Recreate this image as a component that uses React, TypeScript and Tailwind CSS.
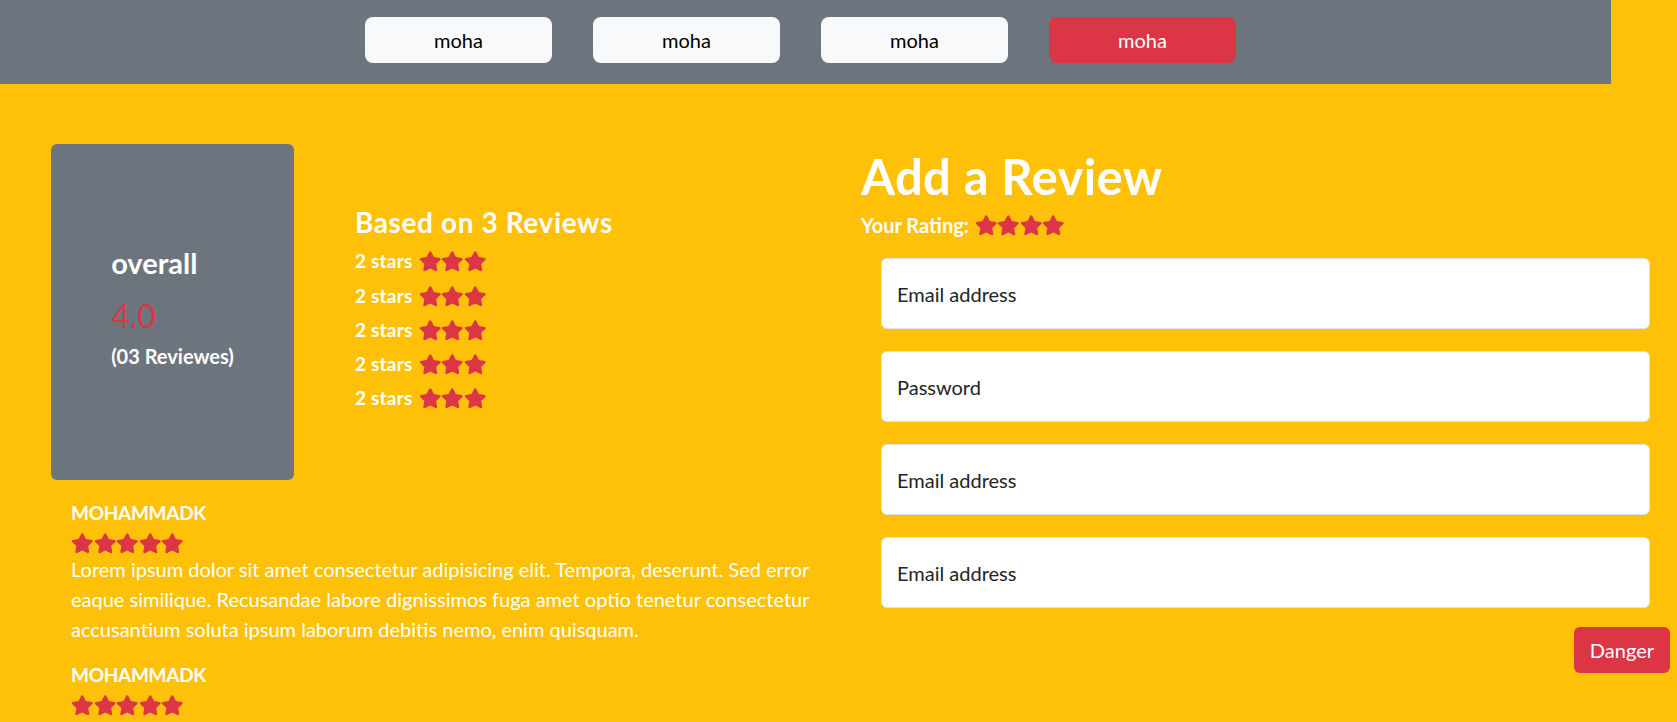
import { FaStar } from "react-icons/fa";

const navItems = ["moha", "moha", "moha", "moha"];
const inputs = ["Email address", "Password", "Email address", "Email address"];

const Stars = ({ count, className }: { count: number; className?: string }) => (
  <div className={`flex items-center text-[22.5px] text-[#dc3545] ${className ?? ""}`}>
    {[...Array(count)].map((_, i) => (
      <FaStar key={i} />
    ))}
  </div>
);

const Review = () => (
  <div className="mb-[19px]">
    <h5 className="text-[19px] leading-[24px] font-bold tracking-[-0.3px] text-white">MOHAMMADK</h5>
    <Stars count={5} className="mt-[8px] h-[21px]" />
    <p className="text-[20px] leading-[30px] text-white">
      Lorem ipsum dolor sit amet consectetur adipisicing elit. Tempora, deserunt. Sed error eaque
      similique. Recusandae labore dignissimos fuga amet optio tenetur consectetur accusantium
      soluta ipsum laborum debitis nemo, enim quisquam.
    </p>
  </div>
);

export default function App() {
  return (
    <div className="min-h-[722px] bg-[#ffc107] font-['Lato','Liberation_Sans',sans-serif] overflow-hidden">
      {/* top nav */}
      <nav className="w-[1611px] h-[84px] bg-[#6c757d] flex justify-center pt-[17px] pr-[10px] gap-[41px]">
        {navItems.map((label, i) => (
          <button
            key={i}
            className={`w-[187px] h-[46px] rounded-lg text-[20px] ${
              i === 3 ? "bg-[#dc3545] text-white" : "bg-[#f8f9fa] text-black"
            }`}
          >
            {label}
          </button>
        ))}
      </nav>

      <div className="flex pt-[60px]">
        {/* left side */}
        <div className="w-[861px] shrink-0">
          <div className="flex items-center pl-[51px]">
            <div className="w-[243px] h-[336px] rounded-md bg-[#6c757d] flex items-center justify-center">
              <div className="pb-[10px]">
                <h3 className="text-[29px] leading-[34px] font-bold text-white mb-[17px]">overall</h3>
                <h2 className="text-[32px] leading-[38px] text-[#dc3545] mb-[10px]">4.0</h2>
                <h5 className="text-[20px] leading-[23px] font-bold text-white">(03 Reviewes)</h5>
              </div>
            </div>
            <div className="ml-[61px] pb-[4px]">
              <h4 className="text-[28px] leading-[34px] font-bold tracking-[0.6px] text-white mb-[6px]">
                Based on 3 Reviews
              </h4>
              {[...Array(5)].map((_, i) => (
                <div key={i} className="flex items-center h-[34.2px] text-[19px] font-bold tracking-[0.2px] text-white">
                  <span>2 stars</span>
                  <Stars count={3} className="ml-[6px]" />
                </div>
              ))}
            </div>
          </div>

          <div className="pl-[71px] w-[840px] mt-[21px]">
            <Review />
            <Review />
          </div>
        </div>

        {/* right side */}
        <div className="w-[809px] shrink-0">
          <h1 className="text-[49px] leading-[58px] font-bold tracking-[0.4px] text-white mt-[3px]">Add a Review</h1>
          <div className="flex items-center mt-[7px] h-[26px] text-[20px] font-bold text-white">
            <span>Your Rating:</span>
            <Stars count={4} className="ml-[6px]" />
          </div>
          <form className="mx-[20px] mt-[20px] flex flex-col gap-[22px]">
            {inputs.map((ph, i) => (
              <input
                key={i}
                type={ph === "Password" ? "password" : "email"}
                placeholder={ph}
                className="h-[71px] rounded-md border border-[#dee2e6] bg-white px-[15px] text-[20px] text-[#212529] placeholder:text-[#212529] outline-none"
              />
            ))}
          </form>
          <div className="flex justify-end mt-[19px]">
            <button className="h-[46px] px-[16px] rounded-md bg-[#dc3545] text-white text-[20px]">
              Danger
            </button>
          </div>
        </div>
      </div>
    </div>
  );
}
